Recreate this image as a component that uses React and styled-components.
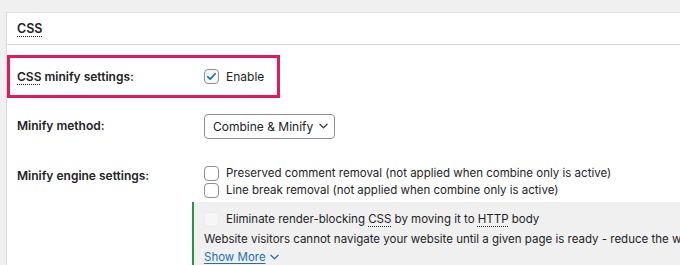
import styled, { createGlobalStyle } from 'styled-components'

const GlobalStyle = createGlobalStyle`
  html, body {
    margin: 0;
    padding: 0;
    background: #f0f0f1;
    font-family: Inter, "Noto Sans", "Liberation Sans", sans-serif;
    font-size: 11.5px;
    color: #1d2327;
    overflow: hidden;
  }
`

const Page = styled.div`
  width: 680px;
  height: 265px;
  padding-top: 12px;
  padding-left: 6px;
  box-sizing: border-box;
  overflow: hidden;
`

const Panel = styled.div`
  width: 720px;
  height: 300px;
  background: #fff;
  border: 1px solid #dcdcde;
  box-sizing: border-box;
`

const Header = styled.div`
  height: 31px;
  display: flex;
  align-items: center;
  padding-left: 10px;
  border-bottom: 1px solid #dcdcde;
  font-weight: 600;
  font-size: 12.5px;
`

const Abbr = styled.abbr`
  text-decoration: underline dotted;
  text-underline-offset: 3px;
  text-decoration-thickness: 1px;
`

const Body = styled.div`
  padding-top: 10px;
`

const Row = styled.div`
  display: flex;
  align-items: ${p => (p.$top ? 'flex-start' : 'center')};
  height: ${p => p.$height}px;
  width: ${p => (p.$highlight ? '273px' : 'auto')};
  outline: ${p => (p.$highlight ? '3px solid #e2195b' : 'none')};
  outline-offset: -3px;
`

const Label = styled.div`
  width: 197px;
  flex-shrink: 0;
  box-sizing: border-box;
  padding-left: 10px;
  padding-top: ${p => p.$pad || 0}px;
  line-height: 20px;
  font-weight: 600;
  font-size: 12px;
`

const Value = styled.div`
  display: flex;
  flex-direction: column;
  padding-top: ${p => p.$pad || 0}px;
`

const Option = styled.label`
  display: flex;
  align-items: center;
  gap: 7px;
  height: ${p => p.$h || 17}px;
  white-space: nowrap;
  line-height: 17px;
  color: #1d2327;
  font-size: ${p => p.$size || 11.5}px;
`

const Box = styled.span`
  width: 13px;
  height: 13px;
  border-radius: 4px;
  border: 1px solid ${p => (p.$disabled ? '#ececec' : '#8c8f94')};
  background: ${p => (p.$disabled ? '#f6f6f6' : p.$checked ? '#f6f7f7' : '#fff')};
  display: flex;
  align-items: center;
  justify-content: center;
  flex-shrink: 0;
`

const Select = styled.div`
  height: 25px;
  box-sizing: border-box;
  border: 1px solid #8c8f94;
  border-radius: 4px;
  display: flex;
  align-items: center;
  gap: 6px;
  padding: 0 6px 0 8px;
  white-space: nowrap;
  font-size: 12px;
`

const Note = styled.div`
  margin-top: 3px;
  margin-left: -12px;
  width: 520px;
  background: #f0f0f1;
  border-left: 2px solid #1e9a3a;
  padding: 8px 0 10px 10px;
`

const Desc = styled.div`
  margin-top: 2px;
  line-height: 18px;
  white-space: nowrap;
`

const More = styled.a`
  display: inline-flex;
  align-items: center;
  gap: 4px;
  color: #2271b1;
  text-decoration: underline;
  text-underline-offset: 2px;
  line-height: 18px;
`

const Check = () => (
  <svg width="11" height="11" viewBox="0 0 12 12">
    <path d="M2 6.3l2.6 2.6L10 3" fill="none" stroke="#2271b1" strokeWidth="1.9" strokeLinecap="round" strokeLinejoin="round" />
  </svg>
)

const Chevron = ({ color }) => (
  <svg width="9" height="6" viewBox="0 0 10 6">
    <path d="M1 1l4 4 4-4" fill="none" stroke={color} strokeWidth="1.4" strokeLinecap="round" strokeLinejoin="round" />
  </svg>
)

export default function App() {
  return (
    <Page>
      <GlobalStyle />
      <Panel>
        <Header>
          <Abbr>CSS</Abbr>
        </Header>
        <Body>
          <Row $highlight $height={43}>
            <Label><Abbr>CSS</Abbr> minify settings:</Label>
            <Option $size={12}>
              <Box $checked><Check /></Box>
              Enable
            </Option>
          </Row>
          <Row $height={56}>
            <Label>Minify method:</Label>
            <Select>
              Combine &amp; Minify
              <Chevron color="#3c434a" />
            </Select>
          </Row>
          <Row $top>
            <Label $pad={12}>Minify engine settings:</Label>
            <Value $pad={11}>
              <Option>
                <Box />
                Preserved comment removal (not applied when combine only is active)
              </Option>
              <Option>
                <Box />
                Line break removal (not applied when combine only is active)
              </Option>
              <Note>
                <Option $h={18}>
                  <Box $disabled />
                  <span>Eliminate render-blocking <Abbr>CSS</Abbr> by moving it to <Abbr>HTTP</Abbr> body</span>
                </Option>
                <Desc>Website visitors cannot navigate your website until a given page is ready - reduce the wait time by moving CSS to the body.</Desc>
                <More href="#">Show More <Chevron color="#2271b1" /></More>
              </Note>
            </Value>
          </Row>
        </Body>
      </Panel>
    </Page>
  )
}
